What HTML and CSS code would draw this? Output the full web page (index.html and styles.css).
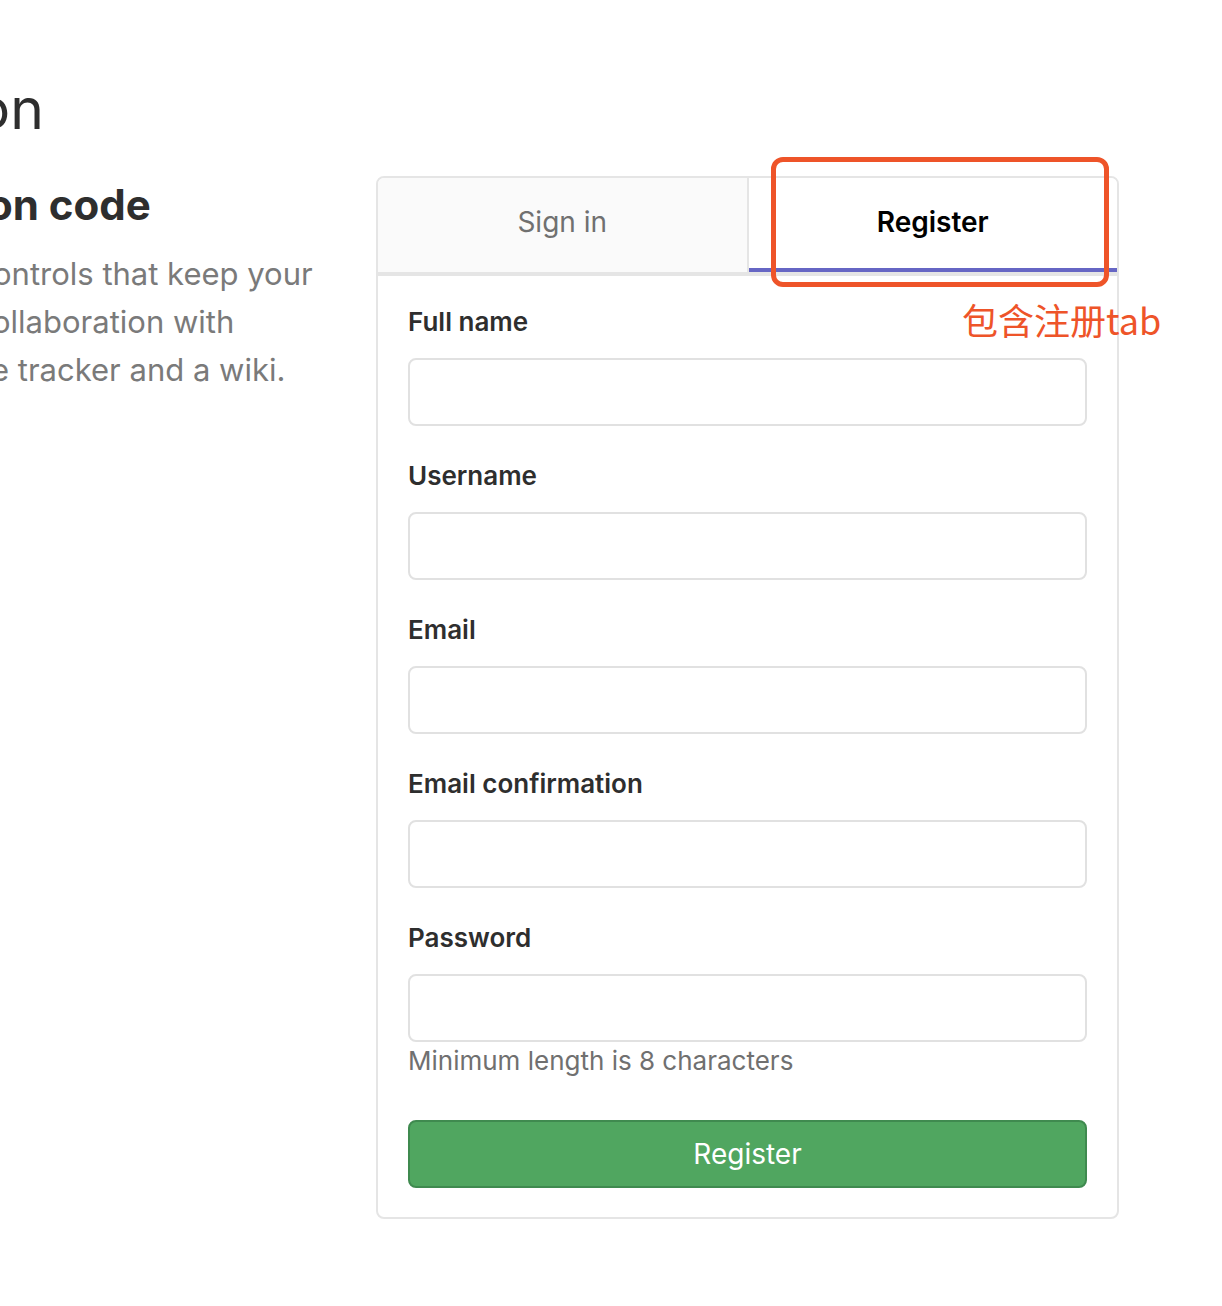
FILE: index.html
```html
<!DOCTYPE html>
<html lang="en">
<head>
<meta charset="utf-8">
<title>Register</title>
<link rel="stylesheet" href="styles.css">
</head>
<body>
<div class="page">
  <section class="brand">
    <h1 class="line line-h1"><span class="pre-wrap"><span class="pre">GitLab Community Editi</span></span><span class="vis">on</span></h1>
    <h3 class="line line-h3"><span class="pre-wrap"><span class="pre">Open source software to collaborate </span></span><span class="vis">on code</span></h3>
    <div class="desc">
      <p class="line line-p1"><span class="pre-wrap"><span class="pre">Manage Git repositories with fine-grained access c</span></span><span class="vis">ontrols that keep your</span></p>
      <p class="line line-p2"><span class="pre-wrap"><span class="pre">code secure. Perform code reviews and enhance c</span></span><span class="vis">ollaboration with</span></p>
      <p class="line line-p3"><span class="pre-wrap"><span class="pre">merge requests. Each project can also have an issu</span></span><span class="vis">e tracker and a wiki.</span></p>
    </div>
  </section>

  <div class="login-box">
    <ul class="tabs">
      <li class="tab">Sign in</li>
      <li class="tab tab-active">Register</li>
    </ul>
    <form class="form">
      <div class="group">
        <label class="label">Full name</label>
        <input class="input" type="text">
      </div>
      <div class="group">
        <label class="label">Username</label>
        <input class="input" type="text">
      </div>
      <div class="group">
        <label class="label">Email</label>
        <input class="input" type="email">
      </div>
      <div class="group">
        <label class="label">Email confirmation</label>
        <input class="input" type="email">
      </div>
      <div class="group group-last">
        <label class="label">Password</label>
        <input class="input" type="password">
        <p class="help">Minimum length is 8 characters</p>
      </div>
      <button class="btn" type="button">Register</button>
    </form>
    <div class="note-box"></div>
    <div class="note-text">包含注册tab</div>
  </div>
</div>
</body>
</html>
```

FILE: styles.css
```css
html, body {
  margin: 0;
  padding: 0;
  background: #ffffff;
}

body {
  font-family: Inter, "Noto Sans", "Liberation Sans", sans-serif;
  color: #2e2e2e;
  overflow: hidden;
  width: 1222px;
  height: 1306px;
}

.page {
  display: flex;
  align-items: flex-start;
}

/* left brand column */
.brand {
  width: 376px;
  flex-shrink: 0;
  padding-top: 74px;
}

.line {
  display: flex;
  white-space: pre;
  margin: 0;
}

.pre-wrap {
  display: flex;
  justify-content: flex-end;
  width: 0;
  flex-shrink: 0;
}

.pre {
  flex-shrink: 0;
  white-space: pre;
}

.line-h1 {
  font-size: 57px;
  font-weight: 400;
  line-height: 70px;
  color: #2e2e2e;
  margin-left: -24px;
  margin-bottom: 36px;
}

.line-h3 {
  font-size: 42px;
  font-weight: 700;
  line-height: 50px;
  color: #2e2e2e;
  margin-left: -13px;
  margin-bottom: 20px;
}

.desc {
  font-size: 31px;
  line-height: 48px;
  color: #7a7a7a;
}

.line-p1 { margin-left: -7px; }
.line-p2 { margin-left: -8px; }
.line-p3 { margin-left: -9px; }

/* login box */
.login-box {
  position: relative;
  margin-top: 176px;
  width: 743px;
  box-sizing: border-box;
  border: 2px solid #e5e5e5;
  border-radius: 8px;
  background: #fff;
}

.tabs {
  list-style: none;
  margin: 0;
  padding: 0;
  display: flex;
  border-bottom: 4px solid #e5e5e5;
}

.tab {
  flex: 1;
  height: 94px;
  box-sizing: border-box;
  padding-top: 24px;
  line-height: 40px;
  text-align: center;
  font-size: 28px;
  color: #707070;
  background: #fafafa;
  border-right: 2px solid #e5e5e5;
  border-top-left-radius: 6px;
}

.tab-active {
  background: #fff;
  border-right: 0;
  border-radius: 0 6px 0 0;
  color: #000;
  font-weight: 600;
  box-shadow: inset 0 -4px 0 #6666c4;
}

.form {
  padding: 30px 30px 29px;
  display: flex;
  flex-direction: column;
}

.group {
  display: flex;
  flex-direction: column;
  margin-bottom: 34px;
}

.group-last {
  margin-bottom: 43px;
}

.label {
  font-size: 26px;
  font-weight: 600;
  line-height: 32px;
  color: #2e2e2e;
  margin-bottom: 20px;
}

.input {
  display: block;
  height: 68px;
  box-sizing: border-box;
  border: 2px solid #e1e1e1;
  border-radius: 8px;
  background: #fff;
  margin: 0;
  padding: 0 20px;
  font-size: 28px;
}

.help {
  margin: 3px 0 0;
  font-size: 26px;
  line-height: 32px;
  color: #707070;
}

.btn {
  height: 68px;
  box-sizing: border-box;
  border: 2px solid #3f8a4f;
  border-radius: 8px;
  background: #50a660;
  color: #fff;
  font-family: inherit;
  font-size: 28px;
  font-weight: 400;
  padding: 0;
  margin: 0;
}

/* annotation overlay */
.note-box {
  position: absolute;
  left: 393px;
  top: -21px;
  width: 338px;
  height: 130px;
  box-sizing: border-box;
  border: 5px solid #ee5429;
  border-radius: 12px;
}

.note-text {
  position: absolute;
  left: 584px;
  top: 117px;
  font-family: "Noto Sans CJK SC", "Noto Sans", sans-serif;
  font-size: 36px;
  line-height: 48px;
  color: #ee5429;
  white-space: nowrap;
}
```
